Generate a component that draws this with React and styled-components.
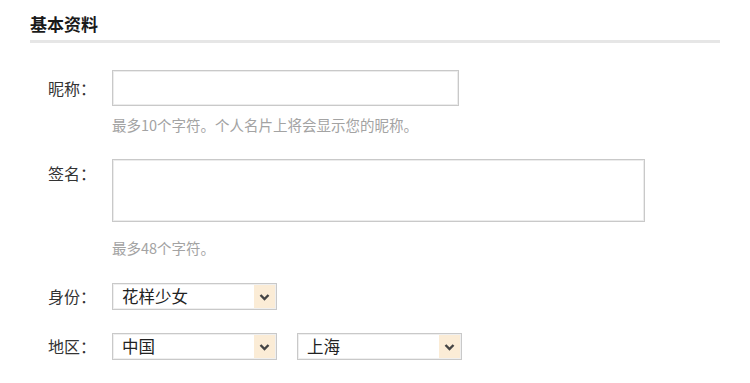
import React from "react";
import styled, { createGlobalStyle } from "styled-components";

const Global = createGlobalStyle`
  html, body { margin: 0; padding: 0; background: #fff; }
  body { font-family: "Noto Sans CJK SC", "Noto Sans", sans-serif; color: #333; }
  * { box-sizing: border-box; }
`;

const Page = styled.div`
  width: 750px;
  padding: 11px 30px 0 30px;
`;

const Title = styled.h2`
  margin: 0;
  font-size: 17px;
  font-weight: 700;
  color: #1a1a1a;
  line-height: 26px;
  padding-bottom: 3px;
  border-bottom: 3px solid #e6e6e6;
`;

const Form = styled.div`
  display: grid;
  grid-template-columns: 82px 1fr;
  padding-top: 27px;
`;

const Label = styled.div`
  padding-left: 18px;
  font-size: 16px;
  color: #333;
  line-height: ${(p) => p.$h || 36}px;
  height: ${(p) => p.$h || 36}px;
  align-self: start;
  margin-top: ${(p) => p.$mt || 0}px;
`;

const Field = styled.div`
  display: flex;
  flex-direction: column;
  margin-top: ${(p) => p.$mt || 0}px;
`;

const TextInput = styled.input`
  width: 347px;
  height: 36px;
  border: 1px solid #c9c9c9;
  box-shadow: inset 0 0 0 1px #ececec;
  outline: none;
  padding: 0 8px;
  font: inherit;
`;

const TextArea = styled.textarea`
  width: 533px;
  height: 63px;
  border: 1px solid #c9c9c9;
  box-shadow: inset 0 0 0 1px #ececec;
  outline: none;
  resize: none;
  padding: 6px 8px;
  font: inherit;
`;

const Hint = styled.div`
  font-size: 14.5px;
  color: #a3a3a3;
  line-height: 20px;
  margin-top: ${(p) => p.$mt || 9}px;
`;

const Selects = styled.div`
  display: flex;
  gap: 20px;
  margin-top: ${(p) => p.$mt || 0}px;
`;

const SelectBox = styled.div`
  width: 165px;
  height: 27px;
  display: flex;
  align-items: stretch;
  border: 1px solid #c9c9c9;
  box-shadow: inset 0 0 0 1px #efefef;
  background: #fff;
  padding: 1px;
`;

const SelectText = styled.span`
  flex: 1;
  padding-left: 8px;
  font-size: 16.5px;
  line-height: 23px;
  color: #222;
`;

const Arrow = styled.span`
  width: 21px;
  background: #fbecd6;
  display: flex;
  align-items: center;
  justify-content: center;
`;

const Chevron = () => (
  <svg width="11" height="8" viewBox="0 0 11 8">
    <path d="M1.5 2 L5.5 6 L9.5 2" fill="none" stroke="#444" strokeWidth="2.4" />
  </svg>
);

const Select = ({ value }) => (
  <SelectBox>
    <SelectText>{value}</SelectText>
    <Arrow>
      <Chevron />
    </Arrow>
  </SelectBox>
);

export default function App() {
  return (
    <Page>
      <Global />
      <Title>基本资料</Title>
      <Form>
        <Label>昵称：</Label>
        <Field>
          <TextInput />
          <Hint>最多10个字符。个人名片上将会显示您的昵称。</Hint>
        </Field>

        <Label $mt={24} $h={28}>签名：</Label>
        <Field $mt={24}>
          <TextArea />
          <Hint $mt={16}>最多48个字符。</Hint>
        </Field>

        <Label $mt={25} $h={27}>身份：</Label>
        <Selects $mt={25}>
          <Select value="花样少女" />
        </Selects>

        <Label $mt={23} $h={27}>地区：</Label>
        <Selects $mt={23}>
          <Select value="中国" />
          <Select value="上海" />
        </Selects>
      </Form>
    </Page>
  );
}
